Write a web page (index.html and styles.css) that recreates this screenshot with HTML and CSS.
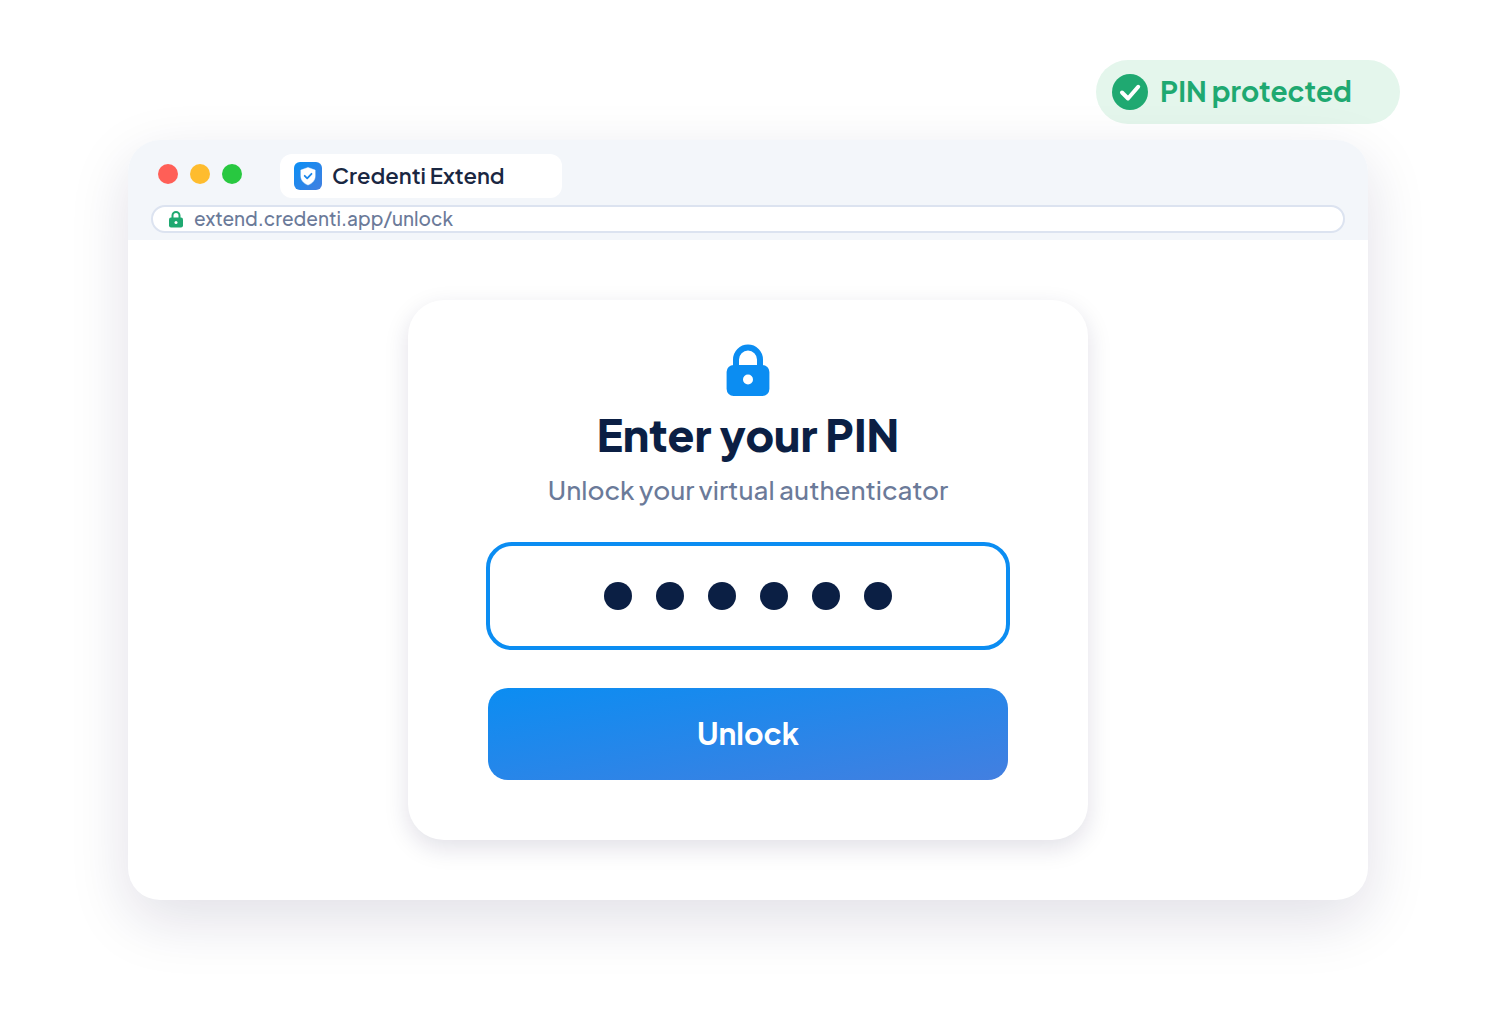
FILE: index.html
```html
<!DOCTYPE html>
<html lang="en">
<head>
    <meta charset="UTF-8">
    <meta name="viewport" content="width=device-width, initial-scale=1.0">
    <title>Credenti Extend</title>
    <link rel="stylesheet" href="styles.css">
</head>
<body>
    <main class="page">
        <div class="badge">
            <svg class="badge-icon" viewBox="0 0 36 36" aria-hidden="true">
                <circle cx="18" cy="18" r="18" fill="#1fa971"/>
                <path d="M10 18.500l6 6L26.200 12.800" fill="none" stroke="#fff" stroke-width="4" stroke-linecap="round" stroke-linejoin="round"/>
            </svg>
            <span class="label">PIN protected</span>
        </div>

        <div class="window">
            <header class="toolbar">
                <div class="tab-row">
                    <div class="window-controls">
                        <button type="button" class="control close" aria-label="Close"></button>
                        <button type="button" class="control minimize" aria-label="Minimize"></button>
                        <button type="button" class="control maximize" aria-label="Maximize"></button>
                    </div>
                    <a class="tab" href="#">
                        <svg class="tab-icon" viewBox="0 0 28 28" aria-hidden="true">
                            <defs>
                                <linearGradient id="brand" x1="0" y1="0" x2="1" y2="1">
                                    <stop offset="0" stop-color="#0a8ff5"/>
                                    <stop offset="1" stop-color="#437fe0"/>
                                </linearGradient>
                            </defs>
                            <rect width="28" height="28" rx="6" fill="url(#brand)"/>
                            <path d="M14 5.4l7.2 2.7v6c0 4.3-3 7.5-7.2 8.9-4.2-1.4-7.2-4.6-7.2-8.9v-6z" fill="#fff" stroke="#fff" stroke-width=".4" stroke-linejoin="round"/>
                            <path d="M10.700 13.800l2.500 2.500 4.300-4.500" fill="none" stroke="#1c88ec" stroke-width="1.800" stroke-linecap="round" stroke-linejoin="round"/>
                        </svg>
                        <span class="label">Credenti Extend</span>
                    </a>
                </div>
                <label class="address">
                    <svg class="address-icon" viewBox="0 0 14 18" aria-hidden="true">
                        <path d="M3.5 9V5.500a3.500 3.500 0 0 1 7 0V9" fill="none" stroke="#1fa971" stroke-width="2"/>
                        <rect y="7.500" width="14" height="10" rx="2" fill="#1fa971"/>
                        <circle cx="7" cy="12.500" r="1.500" fill="#fff"/>
                    </svg>
                    <input class="address-input" type="text" value="extend.credenti.app/unlock" aria-label="Address">
                </label>
            </header>

            <div class="content">
                <form class="card">
                    <svg class="lock-icon" viewBox="0 0 44 52" aria-hidden="true">
                        <path d="M10 24V15.500a12 12 0 0 1 24 0V24" fill="none" stroke="#0b8df2" stroke-width="6"/>
                        <rect x=".6" y="21" width="42.800" height="31" rx="7" fill="#0b8df2"/>
                        <circle cx="22" cy="35.500" r="5" fill="#fff"/>
                    </svg>
                    <h1 class="title">Enter your PIN</h1>
                    <label class="subtitle" for="pin">Unlock your virtual authenticator</label>
                    <div class="pin">
                        <input class="pin-input" id="pin" type="password" inputmode="numeric" maxlength="6">
                        <div class="pin-dots" aria-hidden="true">
                            <span class="dot"></span>
                            <span class="dot"></span>
                            <span class="dot"></span>
                            <span class="dot"></span>
                            <span class="dot"></span>
                            <span class="dot"></span>
                        </div>
                    </div>
                    <button class="unlock label" type="button">Unlock</button>
                </form>
            </div>
        </div>
    </main>
</body>
</html>
```
FILE: styles.css
```css
:root {
    --blue: #0b8df2;
    --blue-end: #437fe0;
    --green: #1fa971;
    --green-bg: #e4f6ec;
    --navy: #0b1f44;
    --muted: #6b7a99;
    --chrome: #f3f6fa;
    --line: #dce3f0;
    --shadow: rgba(24, 16, 72, 0.13);
}

* {
    margin: 0;
    padding: 0;
    box-sizing: border-box;
}

body {
    min-height: 100vh;
    background: #fff;
    color: var(--navy);
    font-family: 'Plus Jakarta Sans', Inter, sans-serif;
}

input,
button {
    font: inherit;
    border: none;
    outline: none;
}

svg {
    flex-shrink: 0;
}

.label {
    padding-bottom: 3px;
}

.page {
    display: flex;
    flex-direction: column;
    gap: 16px;
    padding: 60px 96px;
}

.badge {
    align-self: flex-end;
    display: flex;
    align-items: center;
    gap: 12px;
    min-width: 304px;
    height: 64px;
    padding: 0 16px;
    border-radius: 32px;
    background: var(--green-bg);
    color: var(--green);
    font-size: 28px;
    font-weight: 700;
}

.badge-icon {
    width: 36px;
    height: 36px;
}

.window {
    margin: 0 32px;
    border-radius: 32px;
    background: #fff;
    box-shadow: 0 20px 60px var(--shadow);
}

.toolbar {
    display: flex;
    flex-direction: column;
    gap: 7px;
    padding: 14px 23px 7px;
    border-radius: 32px 32px 0 0;
    background: var(--chrome);
}

.tab-row {
    display: flex;
    align-items: flex-start;
    gap: 38px;
    padding-left: 7px;
}

.window-controls {
    display: flex;
    gap: 12px;
    padding-top: 10px;
}

.control {
    width: 20px;
    height: 20px;
    border-radius: 50%;
}

.close { background: #ff5f57; }
.minimize { background: #febc2e; }
.maximize { background: #28c840; }

.tab {
    display: flex;
    align-items: center;
    gap: 10px;
    min-width: 282px;
    height: 44px;
    padding: 0 14px;
    border-radius: 12px;
    background: #fff;
    color: #1a2742;
    font-size: 22px;
    font-weight: 600;
    text-decoration: none;
}

.tab-icon {
    width: 28px;
    height: 28px;
}

.address {
    display: flex;
    align-items: center;
    gap: 11px;
    height: 28px;
    padding: 0 16px;
    border: 2px solid var(--line);
    border-radius: 14px;
    background: #fff;
}

.address-icon {
    width: 14px;
    height: 18px;
}

.address-input {
    flex: 1;
    min-width: 0;
    height: 24px;
    padding-bottom: 2px;
    background: none;
    color: var(--muted);
    font-size: 19px;
    font-weight: 500;
}

.content {
    display: flex;
    justify-content: center;
    padding: 60px;
}

.card {
    display: flex;
    flex-direction: column;
    align-items: center;
    width: 100%;
    max-width: 680px;
    padding: 44px 78px 60px;
    border-radius: 36px;
    background: #fff;
    box-shadow: 0 8px 24px var(--shadow);
}

.lock-icon {
    width: 44px;
    height: 52px;
}

.title {
    margin-top: 12px;
    font-size: 44px;
    font-weight: 800;
    line-height: 52px;
}

.subtitle {
    margin-top: 12px;
    color: var(--muted);
    font-size: 26px;
    font-weight: 500;
    line-height: 36px;
}

.pin {
    display: grid;
    width: 100%;
    margin-top: 34px;
}

.pin-input,
.pin-dots {
    grid-area: 1 / 1;
}

.pin-input {
    width: 100%;
    height: 108px;
    border: 4px solid var(--blue);
    border-radius: 26px;
    background: #fff;
}

/* entered digits */
.pin-dots {
    display: flex;
    align-items: center;
    justify-content: center;
    gap: 24px;
    pointer-events: none;
}

.dot {
    width: 28px;
    height: 28px;
    border-radius: 50%;
    background: var(--navy);
}

.unlock {
    align-self: stretch;
    height: 92px;
    margin: 38px 2px 0;
    border-radius: 20px;
    background: linear-gradient(to bottom right, var(--blue), var(--blue-end));
    color: #fff;
    font-size: 30px;
    font-weight: 700;
    cursor: pointer;
}
```
